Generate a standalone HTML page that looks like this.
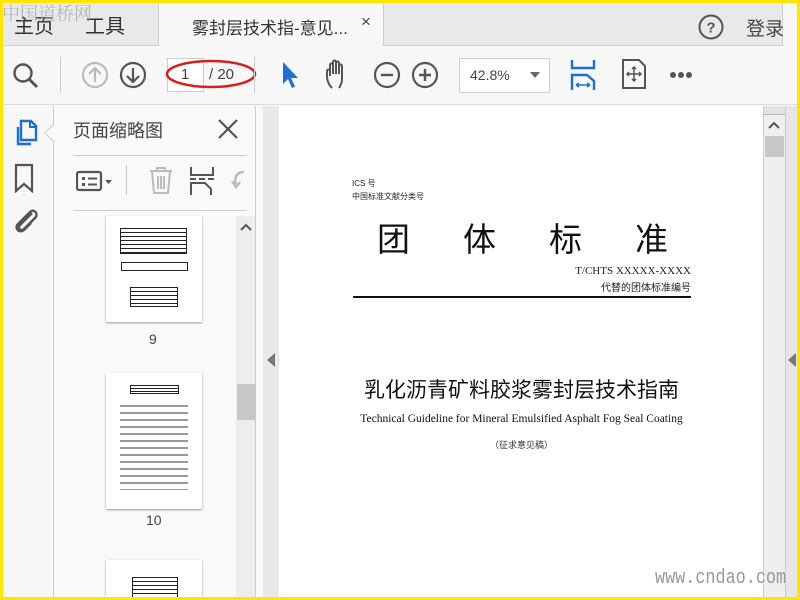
<!DOCTYPE html>
<html><head><meta charset="utf-8"><style>
*{margin:0;padding:0;box-sizing:border-box}
body{width:800px;height:600px;overflow:hidden;background:#f9f9f9;font-family:"Liberation Sans","Noto Sans CJK SC",sans-serif;position:relative}
.a{position:absolute}
.cn{font-family:"Liberation Sans","Noto Sans CJK SC",sans-serif}
.sr{font-family:"Liberation Serif","Noto Serif CJK SC",serif}
</style></head><body>
<!-- top bar -->
<div class="a" style="left:0;top:0;width:800px;height:46px;background:#e9e9e9;border-bottom:1px solid #cfcfcf"></div>
<div class="a cn" style="left:14px;top:10px;font-size:20px;color:#333">主页</div>
<div class="a cn" style="left:85px;top:10px;font-size:20px;color:#333">工具</div>
<div class="a" style="left:158px;top:3px;width:226px;height:44px;background:#f7f7f7;border-left:1px solid #cfcfcf;border-right:1px solid #cfcfcf"></div>
<div class="a cn" style="left:192px;top:14px;font-size:17px;color:#333">雾封层技术指-意见...</div>
<div class="a" style="left:361px;top:12px;font-size:17px;color:#444">×</div>
<div class="a" style="left:782px;top:3px;width:15px;height:43px;background:#f7f7f7;border-left:1px solid #cfcfcf"></div>
<svg class="a" style="left:697px;top:13px" width="28" height="28"><circle cx="14" cy="14" r="11.5" fill="none" stroke="#555" stroke-width="2"/><text x="14" y="19.5" font-size="15" font-weight="bold" text-anchor="middle" fill="#555" font-family="Liberation Sans">?</text></svg>
<div class="a cn" style="left:746px;top:14px;font-size:19px;color:#444">登录</div>
<div class="a" style="left:2px;top:0;font-size:18px;color:#aaa;font-family:'Noto Serif CJK SC',serif;opacity:.8">中国道桥网</div>
<!-- toolbar -->
<div class="a" style="left:0;top:46px;width:800px;height:59px;background:#f7f7f7;border-bottom:1px solid #ddd"></div>
<svg class="a" style="left:10px;top:60px" width="32" height="32"><circle cx="13" cy="13" r="8.5" fill="none" stroke="#555" stroke-width="2.4"/><path d="M19 19 L27 27" stroke="#555" stroke-width="3"/></svg>
<div class="a" style="left:60px;top:57px;width:1px;height:36px;background:#ccc"></div>
<svg class="a" style="left:80px;top:60px" width="30" height="30"><circle cx="15" cy="15" r="12" fill="none" stroke="#bbb" stroke-width="2.2"/><path d="M15 22V8M9 14l6-6 6 6" fill="none" stroke="#bbb" stroke-width="2.2"/></svg>
<svg class="a" style="left:118px;top:60px" width="30" height="30"><circle cx="15" cy="15" r="12" fill="none" stroke="#555" stroke-width="2.2"/><path d="M15 8v14M9 16l6 6 6-6" fill="none" stroke="#555" stroke-width="2.2"/></svg>
<div class="a" style="left:167px;top:58px;width:37px;height:34px;background:#fff;border:1px solid #ccc"></div>
<div class="a" style="left:181px;top:66px;font-size:15px;color:#444">1</div>
<div class="a" style="left:209px;top:66px;font-size:15px;color:#444">/ 20</div>
<svg class="a" style="left:165px;top:55px" width="100" height="40"><ellipse cx="46" cy="19" rx="44" ry="13" fill="none" stroke="#d42020" stroke-width="2.5"/></svg>
<div class="a" style="left:254px;top:57px;width:1px;height:36px;background:#ccc"></div>
<svg class="a" style="left:279px;top:60px" width="24" height="30"><path d="M4 2 L4 24 L9 19 L13 28 L16 26.5 L12 18 L19 18 Z" fill="#1f6fcf"/></svg>
<svg class="a" style="left:322px;top:58px" width="34" height="34"><path d="M10 30 C6 26 5 22 5 18 L5 13 C5 11 8 11 8 13 L8 18 M8 16 V7 C8 5 11 5 11 7 V16 M11 6 V4 C11 2 14 2 14 4 V16 M14 5 C14 3 17 3 17 5 V16 M17 8 C17 6 20 6 20 8 V21 C20 26 18 28 17 30" fill="none" stroke="#555" stroke-width="2"/></svg>
<svg class="a" style="left:372px;top:60px" width="30" height="30"><circle cx="15" cy="15" r="12" fill="none" stroke="#555" stroke-width="2.2"/><path d="M9 15h12" stroke="#555" stroke-width="2.4"/></svg>
<svg class="a" style="left:410px;top:60px" width="30" height="30"><circle cx="15" cy="15" r="12" fill="none" stroke="#555" stroke-width="2.2"/><path d="M9 15h12M15 9v12" stroke="#555" stroke-width="2.4"/></svg>
<div class="a" style="left:459px;top:58px;width:91px;height:35px;background:#fff;border:1px solid #ccc"></div>
<div class="a" style="left:470px;top:67px;font-size:14px;color:#444">42.8%</div>
<div class="a" style="left:530px;top:72px;width:0;height:0;border-left:5px solid transparent;border-right:5px solid transparent;border-top:6px solid #666"></div>
<svg class="a" style="left:570px;top:58px" width="28" height="34"><path d="M2 2v8h22V2" fill="none" stroke="#1f6fcf" stroke-width="2.4"/><path d="M2 32V17h15l7 6v9" fill="none" stroke="#1f6fcf" stroke-width="2.4"/><path d="M6 27h14M6 27l3-2M6 27l3 2M20 27l-3-2M20 27l-3 2" stroke="#1f6fcf" stroke-width="1.5"/></svg>
<svg class="a" style="left:620px;top:58px" width="28" height="32"><path d="M3 2h16l6 6v22H3z" fill="none" stroke="#555" stroke-width="2"/><path d="M14 9v14M7 16h14" stroke="#555" stroke-width="1.5"/><path d="M12 11l2-2 2 2M12 21l2 2 2-2M9 14l-2 2 2 2M19 14l2 2-2 2" fill="none" stroke="#555" stroke-width="1.5"/></svg>
<div class="a" style="left:670px;top:72px;width:6px;height:6px;border-radius:3px;background:#555;box-shadow:8px 0 #555,16px 0 #555"></div>
<!-- left rail -->
<div class="a" style="left:0;top:106px;width:54px;height:494px;background:#f7f7f7;border-right:1px solid #ccc"></div>
<svg class="a" style="left:12px;top:118px" width="28" height="30"><path d="M9 3h10l5 5v14H9z" fill="none" stroke="#1f6fcf" stroke-width="2.4"/><path d="M18 3v6h6" fill="none" stroke="#1f6fcf" stroke-width="2"/><path d="M6 9v17h13" fill="none" stroke="#1f6fcf" stroke-width="2.4"/></svg>
<svg class="a" style="left:44px;top:124px" width="12" height="18"><path d="M10 0 L1 9 L10 18" fill="#f9f9f9" stroke="#ccc"/></svg>
<svg class="a" style="left:13px;top:163px" width="24" height="30"><path d="M3 2h16v26l-8-7-8 7z" fill="none" stroke="#555" stroke-width="2.2"/></svg>
<svg class="a" style="left:10px;top:205px" width="30" height="30"><path d="M22 8 L10 20 C7 23 11 27 14 24 L25 13 C29 9 24 3 20 7 L8 19 C4 23 9 29 14 25 L21 18" fill="none" stroke="#555" stroke-width="2.4"/></svg>
<!-- thumbnail panel -->
<div class="a cn" style="left:73px;top:117px;font-size:18px;color:#444">页面缩略图</div>
<svg class="a" style="left:217px;top:118px" width="22" height="22"><path d="M2 2L20 20M20 2L2 20" stroke="#555" stroke-width="2.2"/></svg>
<div class="a" style="left:73px;top:155px;width:174px;height:1px;background:#ccc"></div>
<div class="a" style="left:73px;top:210px;width:174px;height:1px;background:#ccc"></div>
<svg class="a" style="left:76px;top:170px" width="40" height="24"><rect x="1" y="2" width="24" height="18" rx="2" fill="none" stroke="#555" stroke-width="2.2"/><rect x="6" y="7" width="3" height="3" fill="#555"/><rect x="6" y="13" width="3" height="3" fill="#555"/><path d="M12 8.5h9M12 14.5h9" stroke="#555" stroke-width="2"/><path d="M29 10h7l-3.5 4z" fill="#555"/></svg>
<div class="a" style="left:126px;top:165px;width:1px;height:30px;background:#ccc"></div>
<svg class="a" style="left:147px;top:166px" width="28" height="30"><path d="M3 5h22M10 5V2h8v3M5 5l2 22h14l2-22M11 10v13M14 10v13M17 10v13" fill="none" stroke="#bbb" stroke-width="2"/></svg>
<svg class="a" style="left:189px;top:166px" width="26" height="30"><path d="M2 1v8h22V1M1 13h6M10 13h6M19 13h6" fill="none" stroke="#555" stroke-width="2"/><path d="M2 29V17h14l6 6v6" fill="none" stroke="#555" stroke-width="2"/></svg>
<svg class="a" style="left:230px;top:166px" width="18" height="30"><path d="M14 6 C6 6 4 12 6 18 M2 15 l4 6 4-5" fill="none" stroke="#bbb" stroke-width="2.4"/></svg>
<!-- thumbnails -->
<div class="a" style="left:106px;top:216px;width:96px;height:106px;background:#fff;box-shadow:0 1px 2px #999"></div>
<div class="a" style="left:120px;top:228px;width:67px;height:26px;border:1.5px solid #222;background:repeating-linear-gradient(#fff 0 3px,#222 3px 4px)"></div>
<div class="a" style="left:121px;top:262px;width:67px;height:9px;border:1.5px solid #222"></div>
<div class="a" style="left:130px;top:287px;width:48px;height:20px;border:1.5px solid #222;background:repeating-linear-gradient(#fff 0 3px,#222 3px 4px)"></div>
<div class="a" style="left:149px;top:331px;font-size:14px;color:#444">9</div>
<div class="a" style="left:106px;top:373px;width:96px;height:136px;background:#fff;box-shadow:0 1px 2px #999"></div>
<div class="a" style="left:130px;top:385px;width:49px;height:9px;border:1px solid #222;background:repeating-linear-gradient(#fff 0 2px,#222 2px 3px)"></div>
<div class="a" style="left:120px;top:400px;width:68px;height:90px;background:repeating-linear-gradient(#fff 0 5px,#999 5px 7px)"></div>
<div class="a" style="left:146px;top:512px;font-size:14px;color:#444">10</div>
<div class="a" style="left:106px;top:560px;width:96px;height:40px;background:#fff;box-shadow:0 1px 2px #999"></div>
<div class="a" style="left:132px;top:577px;width:46px;height:23px;border:1px solid #222;background:repeating-linear-gradient(#fff 0 3px,#222 3px 4px)"></div>
<!-- panel scrollbar -->
<div class="a" style="left:236px;top:216px;width:19px;height:384px;background:#ededed"></div>
<svg class="a" style="left:239px;top:222px" width="14" height="10"><path d="M2 8l5-5 5 5" fill="none" stroke="#555" stroke-width="2"/></svg>
<div class="a" style="left:237px;top:384px;width:18px;height:36px;background:#c8c8c8"></div>
<div class="a" style="left:255px;top:106px;width:1px;height:494px;background:#ccc"></div>
<!-- splitter -->
<div class="a" style="left:263px;top:106px;width:16px;height:494px;background:#e8e8e8"></div>
<div class="a" style="left:267px;top:353px;width:0;height:0;border-top:7px solid transparent;border-bottom:7px solid transparent;border-right:8px solid #777"></div>
<!-- document -->
<div class="a" style="left:279px;top:106px;width:485px;height:494px;background:#fff"></div>
<div class="a cn" style="left:352px;top:178px;font-size:8px;color:#222">ICS 号</div>
<div class="a cn" style="left:352px;top:191px;font-size:8px;color:#222">中国标准文献分类号</div>
<div class="a cn" style="left:377px;top:218px;font-size:33px;line-height:44px;color:#111;width:291px;display:flex;justify-content:space-between"><span>团</span><span>体</span><span>标</span><span>准</span></div>
<div class="a sr" style="left:540px;top:265px;width:151px;text-align:right;font-size:11px;color:#222">T/CHTS XXXXX-XXXX</div>
<div class="a cn" style="left:540px;top:279px;width:151px;text-align:right;font-size:10px;color:#222">代替的团体标准编号</div>
<div class="a" style="left:353px;top:296px;width:338px;height:1.5px;background:#111"></div>
<div class="a cn" style="left:279px;top:374px;width:485px;text-align:center;font-size:21px;color:#111">乳化沥青矿料胶浆雾封层技术指南</div>
<div class="a sr" style="left:279px;top:413px;width:485px;text-align:center;font-size:11.5px;color:#111">Technical Guideline for Mineral Emulsified Asphalt Fog Seal Coating</div>
<div class="a cn" style="left:279px;top:438px;width:485px;text-align:center;font-size:9px;color:#333">（征求意见稿）</div>
<!-- right scrollbar -->
<div class="a" style="left:763px;top:106px;width:1px;height:494px;background:#ccc"></div>
<div class="a" style="left:764px;top:106px;width:21px;height:494px;background:#efefef"></div>
<div class="a" style="left:764px;top:106px;width:21px;height:9px;background:#e4e4e4;border-bottom:1px solid #bbb"></div>
<svg class="a" style="left:767px;top:120px" width="14" height="10"><path d="M2 8l5-5 5 5" fill="none" stroke="#555" stroke-width="2"/></svg>
<div class="a" style="left:765px;top:136px;width:19px;height:21px;background:#c8c8c8"></div>
<div class="a" style="left:785px;top:106px;width:1px;height:494px;background:#ccc"></div>
<div class="a" style="left:786px;top:106px;width:11px;height:494px;background:#e6e6e6"></div>
<div class="a" style="left:788px;top:353px;width:0;height:0;border-top:7px solid transparent;border-bottom:7px solid transparent;border-right:8px solid #777"></div>
<div class="a" style="left:655px;top:567px;font-family:'Liberation Mono',monospace;font-size:20px;color:#999;transform:scaleX(.84);transform-origin:left;white-space:nowrap">www.cndao.com</div>
<!-- yellow frame -->
<div class="a" style="left:0;top:0;width:800px;height:600px;border:3px solid #ffe600"></div>
</body></html>
